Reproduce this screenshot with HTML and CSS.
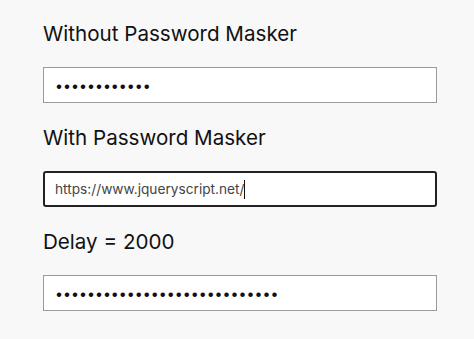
FILE: index.html
```html
<!DOCTYPE html>
<html lang="en">
<head>
  <link rel="stylesheet" href="styles.css">
</head>
<body>

<div class="demo">
  <div class="field">
    <h3 class="label">Without Password Masker</h3>
    <input class="box box-secret" type="password" value="jqueryscript">
  </div>

  <div class="field">
    <h3 class="label">With Password Masker</h3>
    <div class="box-wrap">
      <input class="box box-active" type="text" value="https://www.jqueryscript.net/">
      <span class="caret"></span>
    </div>
  </div>

  <div class="field">
    <h3 class="label">Delay = 2000</h3>
    <input class="box box-secret" type="password" value="abcdefghijklmnopqrstuvwxyz01">
  </div>
</div>

</body>
</html>
```

FILE: styles.css
```css
body {
  margin: 0;
  background: #f8f8f8;
  font-family: Inter, 'Liberation Sans', sans-serif;
  color: #111;
}

.demo {
  display: flex;
  flex-direction: column;
  gap: 21px;
  padding: 20px 37px 0 43px;
}

.label {
  margin: 0 0 19px;
  font-size: 20.6px;
  line-height: 28px;
  font-weight: 400;
}

.box {
  display: block;
  box-sizing: border-box;
  width: 100%;
  height: 36px;
  margin: 0;
  padding: 0 11px;
  border: 1px solid #9a9a9a;
  border-radius: 0;
  background: #fff;
  font-family: Inter, 'Liberation Sans', sans-serif;
  font-size: 14.2px;
  color: #444;
  outline: none;
}

.box-secret {
  color: #111;
}

.box-wrap {
  position: relative;
}

.box-active {
  border: 2px solid #222;
  border-radius: 3px;
  padding: 0 10px;
  font-size: 13.7px;
}

.caret {
  position: absolute;
  left: 201px;
  top: 9px;
  width: 1px;
  height: 19px;
  background: #111;
}
```
